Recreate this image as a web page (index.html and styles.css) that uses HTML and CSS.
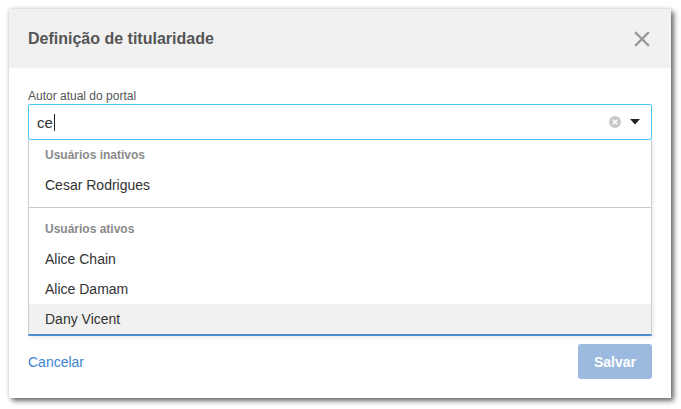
FILE: index.html
```html
<!DOCTYPE html>
<html lang="pt">
<head>
<meta charset="utf-8">
<link rel="stylesheet" href="styles.css">
</head>
<body>
<div class="dialog">
  <div class="dialog-header">
    <h1 class="title">Definição de titularidade</h1>
    <svg class="close" width="16" height="16" viewBox="0 0 16 16"><path d="M2 2 L14 14 M14 2 L2 14" stroke="#9a9a9a" stroke-width="2.4" stroke-linecap="square"/></svg>
  </div>
  <div class="dialog-body">
    <label class="label">Autor atual do portal</label>
    <div class="select">
      <div class="input">
        <span class="value">ce</span><span class="cursor"></span>
        <span class="spacer"></span>
        <svg class="clear" width="12" height="12" viewBox="0 0 12 12"><circle cx="6" cy="6" r="6" fill="#c8c8c8"/><path d="M3.8 3.8 L8.2 8.2 M8.2 3.8 L3.8 8.2" stroke="#fff" stroke-width="1.6"/></svg>
        <svg class="caret" width="10" height="6" viewBox="0 0 10 6"><path d="M0 0 L10 0 L5 5.5 Z" fill="#222"/></svg>
      </div>
      <div class="menu">
        <div class="group">
          <div class="group-title">Usuários inativos</div>
          <div class="option">Cesar Rodrigues</div>
        </div>
        <div class="group group-sep">
          <div class="group-title">Usuários ativos</div>
          <div class="option">Alice Chain</div>
          <div class="option">Alice Damam</div>
          <div class="option active">Dany Vicent</div>
        </div>
      </div>
    </div>
    <div class="footer">
      <a class="cancel">Cancelar</a>
      <button class="save">Salvar</button>
    </div>
  </div>
</div>
</body>
</html>
```
FILE: styles.css
```css
html, body {
  margin: 0;
  padding: 0;
  background: #ffffff;
}
body {
  padding: 9px;
  font-family: "Liberation Sans", Arial, sans-serif;
}
.dialog {
  width: 662px;
  height: 389px;
  background: #fff;
  display: flex;
  flex-direction: column;
  box-shadow: 3px 3px 5px rgba(0,0,0,0.55), 0 0 4px rgba(0,0,0,0.18);
}
.dialog-header {
  height: 59px;
  background: #f1f1f1;
  display: flex;
  align-items: center;
  justify-content: space-between;
  padding: 0 21px 0 19px;
  flex: none;
}
.title {
  margin: 0;
  font-size: 16px;
  font-weight: bold;
  color: #555;
}
.close {
  display: block;
}
.dialog-body {
  flex: 1;
  display: flex;
  flex-direction: column;
  padding: 21px 19px 19px 19px;
}
.label {
  font-size: 12px;
  color: #555;
  line-height: 14px;
  margin-bottom: 1px;
}
.select {
  position: relative;
}
.input {
  height: 36px;
  box-sizing: border-box;
  border: 1px solid #4cc6f7;
  border-radius: 2px;
  display: flex;
  align-items: center;
  padding: 0 11px 0 8px;
  font-size: 15px;
  color: #333;
}
.cursor {
  display: inline-block;
  width: 1px;
  height: 17px;
  background: #222;
  margin-left: 1px;
}
.spacer { flex: 1; }
.clear { margin-right: 9px; }
.menu {
  position: absolute;
  left: 0;
  right: 0;
  top: 36px;
  background: #fff;
  border: 1px solid #cfcfcf;
  border-top: none;
  border-bottom: 2px solid #4a8fd6;
  box-shadow: 2px 2px 4px rgba(0,0,0,0.08);
}
.group { padding-bottom: 7px; }
.group-sep {
  border-top: 1px solid #cbcbcb;
  padding-top: 6px;
  padding-bottom: 0;
}
.group-title {
  height: 30px;
  line-height: 30px;
  padding-left: 16px;
  font-size: 12px;
  font-weight: bold;
  color: #8a8a8a;
}
.option {
  height: 30px;
  line-height: 30px;
  padding-left: 16px;
  font-size: 14px;
  color: #333;
}
.option.active { background: #f1f1f1; }
.footer {
  margin-top: auto;
  display: flex;
  justify-content: space-between;
  align-items: center;
}
.cancel {
  font-size: 14px;
  color: #3a86cf;
  cursor: pointer;
}
.save {
  width: 74px;
  height: 35px;
  border: none;
  border-radius: 3px;
  background: #9cbadd;
  color: #fff;
  font-family: "Liberation Sans", Arial, sans-serif;
  font-size: 14px;
  font-weight: bold;
}
```
